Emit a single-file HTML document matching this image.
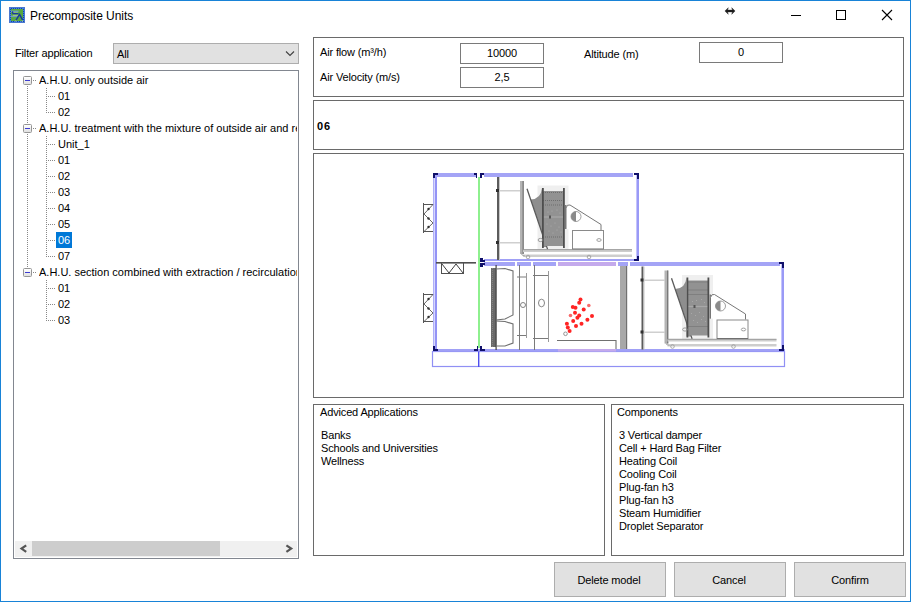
<!DOCTYPE html>
<html><head><meta charset="utf-8">
<style>
*{margin:0;padding:0;box-sizing:border-box}
html,body{width:911px;height:602px;overflow:hidden;background:#fff}
body{position:relative;font-family:"Liberation Sans",sans-serif;font-size:11px;color:#000}
.a{position:absolute}
.t{position:absolute;white-space:nowrap;line-height:13px;letter-spacing:-0.15px}
.win{left:0;top:0;width:911px;height:602px;border:1px solid #1883d7}
.grp{position:absolute;border:1px solid #6a6a6a}
.tb{position:absolute;border:1px solid #7a7a7a;background:#fff}
.btn{position:absolute;border:1px solid #adadad;background:#e1e1e1;width:112px;height:35px}
.dv{position:absolute;width:1px;background-image:linear-gradient(#808080 50%,transparent 50%);background-size:1px 2px}
.dh{position:absolute;height:1px;background-image:linear-gradient(90deg,#808080 50%,transparent 50%);background-size:2px 1px}
.exp{position:absolute;width:9px;height:9px;border:1px solid #959595;border-radius:1.5px;background:linear-gradient(#fff,#e0e0e0)}
.exp i{position:absolute;left:1px;top:3px;width:5px;height:1px;background:#3c3cd0}
</style></head><body>
<div class="a win"></div>
<!-- title bar -->
<svg class="a" style="left:9px;top:7px" width="16" height="16" viewBox="0 0 16 16">
<rect x="0" y="0" width="16" height="16" fill="#4a78d0"/>
<rect x="1" y="1" width="14" height="14" fill="#1a3fa8"/>
<rect x="2" y="2" width="12" height="12" fill="#58a840"/>
<path d="M1 1.5H15M1 14.5H15M1.5 1V15M14.5 1V15" stroke="#3a86e8" stroke-width="1" stroke-dasharray="1 1"/>
<rect x="2" y="3.6" width="7.5" height="1.6" fill="#6f9cc0"/>
<rect x="4" y="5.6" width="5" height="1" fill="#b8d890"/>
<rect x="1.5" y="8.5" width="7" height="1.6" fill="#6f9cc0"/>
<rect x="4" y="7.8" width="5" height="0.8" fill="#b8d890"/>
<path d="M4 4.5Q3 5.5 4 6.7H9.5" fill="none" stroke="#1838a0" stroke-width="1.3"/>
<path d="M7 13.2L10.6 7.5L13.6 13.2" fill="none" stroke="#1838a0" stroke-width="1.4"/>
<path d="M6 14L7.5 14M12.5 14L14 14" stroke="#c8e0a0" stroke-width="0.8"/>
</svg>
<div class="t" style="left:30px;top:9px;font-size:12px;line-height:15px;letter-spacing:-0.05px">Precomposite Units</div>
<svg class="a" style="left:724px;top:7px" width="13" height="8" viewBox="0 0 13 8">
<path d="M0.9 4L4.3 0.7L3.6 3.1H8.4L7.7 0.7L11.1 4L7.7 7.3L8.4 4.9H3.6L4.3 7.3Z" fill="#1e1e1e" stroke="#1e1e1e" stroke-width="0.4" stroke-linejoin="round"/>
</svg>
<div class="a" style="left:791px;top:15px;width:10px;height:1px;background:#000"></div>
<div class="a" style="left:836px;top:10px;width:10px;height:10px;border:1px solid #000"></div>
<svg class="a" style="left:881px;top:9px" width="12" height="12" viewBox="0 0 12 12">
<path d="M1 1L11 11M11 1L1 11" stroke="#000" stroke-width="1.1"/>
</svg>

<!-- filter -->
<div class="t" style="left:15px;top:47px">Filter application</div>
<div class="a" style="left:113px;top:43px;width:186px;height:21px;border:1px solid #adadad;background:#e1e1e1"></div>
<div class="t" style="left:117px;top:48px">All</div>
<svg class="a" style="left:285px;top:50px" width="10" height="7" viewBox="0 0 10 7">
<path d="M1 1.5L5 5.5L9 1.5" stroke="#404040" stroke-width="1.1" fill="none"/>
</svg>

<!-- tree -->
<div class="a" style="left:13px;top:70px;width:286px;height:489px;border:1px solid #828790;background:#fff;overflow:hidden">
</div>
<div class="a" style="left:15px;top:541px;width:282px;height:16px;background:#f0f0f0"></div>
<div class="a" style="left:32px;top:541px;width:188px;height:15px;background:#cdcdcd"></div>
<svg class="a" style="left:14px;top:541px" width="284" height="17" viewBox="0 0 284 17">
<path d="M12.2 4.3L7.5 7.6L12.2 10.9" stroke="#555" stroke-width="2.2" fill="none"/>
<path d="M272.4 4.3L277.2 7.6L272.4 10.9" stroke="#555" stroke-width="2.2" fill="none"/>
</svg>
<!--TREE--><svg class="a" style="left:0;top:0" width="120" height="360"><rect x="33" y="80" width="1" height="1" fill="#888888"/><rect x="35" y="80" width="1" height="1" fill="#888888"/><rect x="48" y="96" width="1" height="1" fill="#888888"/><rect x="50" y="96" width="1" height="1" fill="#888888"/><rect x="52" y="96" width="1" height="1" fill="#888888"/><rect x="54" y="96" width="1" height="1" fill="#888888"/><rect x="48" y="112" width="1" height="1" fill="#888888"/><rect x="50" y="112" width="1" height="1" fill="#888888"/><rect x="52" y="112" width="1" height="1" fill="#888888"/><rect x="54" y="112" width="1" height="1" fill="#888888"/><rect x="33" y="128" width="1" height="1" fill="#888888"/><rect x="35" y="128" width="1" height="1" fill="#888888"/><rect x="48" y="144" width="1" height="1" fill="#888888"/><rect x="50" y="144" width="1" height="1" fill="#888888"/><rect x="52" y="144" width="1" height="1" fill="#888888"/><rect x="54" y="144" width="1" height="1" fill="#888888"/><rect x="48" y="160" width="1" height="1" fill="#888888"/><rect x="50" y="160" width="1" height="1" fill="#888888"/><rect x="52" y="160" width="1" height="1" fill="#888888"/><rect x="54" y="160" width="1" height="1" fill="#888888"/><rect x="48" y="176" width="1" height="1" fill="#888888"/><rect x="50" y="176" width="1" height="1" fill="#888888"/><rect x="52" y="176" width="1" height="1" fill="#888888"/><rect x="54" y="176" width="1" height="1" fill="#888888"/><rect x="48" y="192" width="1" height="1" fill="#888888"/><rect x="50" y="192" width="1" height="1" fill="#888888"/><rect x="52" y="192" width="1" height="1" fill="#888888"/><rect x="54" y="192" width="1" height="1" fill="#888888"/><rect x="48" y="208" width="1" height="1" fill="#888888"/><rect x="50" y="208" width="1" height="1" fill="#888888"/><rect x="52" y="208" width="1" height="1" fill="#888888"/><rect x="54" y="208" width="1" height="1" fill="#888888"/><rect x="48" y="224" width="1" height="1" fill="#888888"/><rect x="50" y="224" width="1" height="1" fill="#888888"/><rect x="52" y="224" width="1" height="1" fill="#888888"/><rect x="54" y="224" width="1" height="1" fill="#888888"/><rect x="48" y="240" width="1" height="1" fill="#888888"/><rect x="50" y="240" width="1" height="1" fill="#888888"/><rect x="52" y="240" width="1" height="1" fill="#888888"/><rect x="54" y="240" width="1" height="1" fill="#888888"/><rect x="48" y="256" width="1" height="1" fill="#888888"/><rect x="50" y="256" width="1" height="1" fill="#888888"/><rect x="52" y="256" width="1" height="1" fill="#888888"/><rect x="54" y="256" width="1" height="1" fill="#888888"/><rect x="33" y="272" width="1" height="1" fill="#888888"/><rect x="35" y="272" width="1" height="1" fill="#888888"/><rect x="48" y="288" width="1" height="1" fill="#888888"/><rect x="50" y="288" width="1" height="1" fill="#888888"/><rect x="52" y="288" width="1" height="1" fill="#888888"/><rect x="54" y="288" width="1" height="1" fill="#888888"/><rect x="48" y="304" width="1" height="1" fill="#888888"/><rect x="50" y="304" width="1" height="1" fill="#888888"/><rect x="52" y="304" width="1" height="1" fill="#888888"/><rect x="54" y="304" width="1" height="1" fill="#888888"/><rect x="48" y="320" width="1" height="1" fill="#888888"/><rect x="50" y="320" width="1" height="1" fill="#888888"/><rect x="52" y="320" width="1" height="1" fill="#888888"/><rect x="54" y="320" width="1" height="1" fill="#888888"/><rect x="27" y="86" width="1" height="1" fill="#888888"/><rect x="27" y="88" width="1" height="1" fill="#888888"/><rect x="27" y="90" width="1" height="1" fill="#888888"/><rect x="27" y="92" width="1" height="1" fill="#888888"/><rect x="27" y="94" width="1" height="1" fill="#888888"/><rect x="27" y="96" width="1" height="1" fill="#888888"/><rect x="27" y="98" width="1" height="1" fill="#888888"/><rect x="27" y="100" width="1" height="1" fill="#888888"/><rect x="27" y="102" width="1" height="1" fill="#888888"/><rect x="27" y="104" width="1" height="1" fill="#888888"/><rect x="27" y="106" width="1" height="1" fill="#888888"/><rect x="27" y="108" width="1" height="1" fill="#888888"/><rect x="27" y="110" width="1" height="1" fill="#888888"/><rect x="27" y="112" width="1" height="1" fill="#888888"/><rect x="27" y="114" width="1" height="1" fill="#888888"/><rect x="27" y="116" width="1" height="1" fill="#888888"/><rect x="27" y="118" width="1" height="1" fill="#888888"/><rect x="27" y="120" width="1" height="1" fill="#888888"/><rect x="27" y="122" width="1" height="1" fill="#888888"/><rect x="27" y="134" width="1" height="1" fill="#888888"/><rect x="27" y="136" width="1" height="1" fill="#888888"/><rect x="27" y="138" width="1" height="1" fill="#888888"/><rect x="27" y="140" width="1" height="1" fill="#888888"/><rect x="27" y="142" width="1" height="1" fill="#888888"/><rect x="27" y="144" width="1" height="1" fill="#888888"/><rect x="27" y="146" width="1" height="1" fill="#888888"/><rect x="27" y="148" width="1" height="1" fill="#888888"/><rect x="27" y="150" width="1" height="1" fill="#888888"/><rect x="27" y="152" width="1" height="1" fill="#888888"/><rect x="27" y="154" width="1" height="1" fill="#888888"/><rect x="27" y="156" width="1" height="1" fill="#888888"/><rect x="27" y="158" width="1" height="1" fill="#888888"/><rect x="27" y="160" width="1" height="1" fill="#888888"/><rect x="27" y="162" width="1" height="1" fill="#888888"/><rect x="27" y="164" width="1" height="1" fill="#888888"/><rect x="27" y="166" width="1" height="1" fill="#888888"/><rect x="27" y="168" width="1" height="1" fill="#888888"/><rect x="27" y="170" width="1" height="1" fill="#888888"/><rect x="27" y="172" width="1" height="1" fill="#888888"/><rect x="27" y="174" width="1" height="1" fill="#888888"/><rect x="27" y="176" width="1" height="1" fill="#888888"/><rect x="27" y="178" width="1" height="1" fill="#888888"/><rect x="27" y="180" width="1" height="1" fill="#888888"/><rect x="27" y="182" width="1" height="1" fill="#888888"/><rect x="27" y="184" width="1" height="1" fill="#888888"/><rect x="27" y="186" width="1" height="1" fill="#888888"/><rect x="27" y="188" width="1" height="1" fill="#888888"/><rect x="27" y="190" width="1" height="1" fill="#888888"/><rect x="27" y="192" width="1" height="1" fill="#888888"/><rect x="27" y="194" width="1" height="1" fill="#888888"/><rect x="27" y="196" width="1" height="1" fill="#888888"/><rect x="27" y="198" width="1" height="1" fill="#888888"/><rect x="27" y="200" width="1" height="1" fill="#888888"/><rect x="27" y="202" width="1" height="1" fill="#888888"/><rect x="27" y="204" width="1" height="1" fill="#888888"/><rect x="27" y="206" width="1" height="1" fill="#888888"/><rect x="27" y="208" width="1" height="1" fill="#888888"/><rect x="27" y="210" width="1" height="1" fill="#888888"/><rect x="27" y="212" width="1" height="1" fill="#888888"/><rect x="27" y="214" width="1" height="1" fill="#888888"/><rect x="27" y="216" width="1" height="1" fill="#888888"/><rect x="27" y="218" width="1" height="1" fill="#888888"/><rect x="27" y="220" width="1" height="1" fill="#888888"/><rect x="27" y="222" width="1" height="1" fill="#888888"/><rect x="27" y="224" width="1" height="1" fill="#888888"/><rect x="27" y="226" width="1" height="1" fill="#888888"/><rect x="27" y="228" width="1" height="1" fill="#888888"/><rect x="27" y="230" width="1" height="1" fill="#888888"/><rect x="27" y="232" width="1" height="1" fill="#888888"/><rect x="27" y="234" width="1" height="1" fill="#888888"/><rect x="27" y="236" width="1" height="1" fill="#888888"/><rect x="27" y="238" width="1" height="1" fill="#888888"/><rect x="27" y="240" width="1" height="1" fill="#888888"/><rect x="27" y="242" width="1" height="1" fill="#888888"/><rect x="27" y="244" width="1" height="1" fill="#888888"/><rect x="27" y="246" width="1" height="1" fill="#888888"/><rect x="27" y="248" width="1" height="1" fill="#888888"/><rect x="27" y="250" width="1" height="1" fill="#888888"/><rect x="27" y="252" width="1" height="1" fill="#888888"/><rect x="27" y="254" width="1" height="1" fill="#888888"/><rect x="27" y="256" width="1" height="1" fill="#888888"/><rect x="27" y="258" width="1" height="1" fill="#888888"/><rect x="27" y="260" width="1" height="1" fill="#888888"/><rect x="27" y="262" width="1" height="1" fill="#888888"/><rect x="27" y="264" width="1" height="1" fill="#888888"/><rect x="27" y="266" width="1" height="1" fill="#888888"/><rect x="46" y="88" width="1" height="1" fill="#888888"/><rect x="46" y="90" width="1" height="1" fill="#888888"/><rect x="46" y="92" width="1" height="1" fill="#888888"/><rect x="46" y="94" width="1" height="1" fill="#888888"/><rect x="46" y="96" width="1" height="1" fill="#888888"/><rect x="46" y="98" width="1" height="1" fill="#888888"/><rect x="46" y="100" width="1" height="1" fill="#888888"/><rect x="46" y="102" width="1" height="1" fill="#888888"/><rect x="46" y="104" width="1" height="1" fill="#888888"/><rect x="46" y="106" width="1" height="1" fill="#888888"/><rect x="46" y="108" width="1" height="1" fill="#888888"/><rect x="46" y="110" width="1" height="1" fill="#888888"/><rect x="46" y="112" width="1" height="1" fill="#888888"/><rect x="46" y="136" width="1" height="1" fill="#888888"/><rect x="46" y="138" width="1" height="1" fill="#888888"/><rect x="46" y="140" width="1" height="1" fill="#888888"/><rect x="46" y="142" width="1" height="1" fill="#888888"/><rect x="46" y="144" width="1" height="1" fill="#888888"/><rect x="46" y="146" width="1" height="1" fill="#888888"/><rect x="46" y="148" width="1" height="1" fill="#888888"/><rect x="46" y="150" width="1" height="1" fill="#888888"/><rect x="46" y="152" width="1" height="1" fill="#888888"/><rect x="46" y="154" width="1" height="1" fill="#888888"/><rect x="46" y="156" width="1" height="1" fill="#888888"/><rect x="46" y="158" width="1" height="1" fill="#888888"/><rect x="46" y="160" width="1" height="1" fill="#888888"/><rect x="46" y="162" width="1" height="1" fill="#888888"/><rect x="46" y="164" width="1" height="1" fill="#888888"/><rect x="46" y="166" width="1" height="1" fill="#888888"/><rect x="46" y="168" width="1" height="1" fill="#888888"/><rect x="46" y="170" width="1" height="1" fill="#888888"/><rect x="46" y="172" width="1" height="1" fill="#888888"/><rect x="46" y="174" width="1" height="1" fill="#888888"/><rect x="46" y="176" width="1" height="1" fill="#888888"/><rect x="46" y="178" width="1" height="1" fill="#888888"/><rect x="46" y="180" width="1" height="1" fill="#888888"/><rect x="46" y="182" width="1" height="1" fill="#888888"/><rect x="46" y="184" width="1" height="1" fill="#888888"/><rect x="46" y="186" width="1" height="1" fill="#888888"/><rect x="46" y="188" width="1" height="1" fill="#888888"/><rect x="46" y="190" width="1" height="1" fill="#888888"/><rect x="46" y="192" width="1" height="1" fill="#888888"/><rect x="46" y="194" width="1" height="1" fill="#888888"/><rect x="46" y="196" width="1" height="1" fill="#888888"/><rect x="46" y="198" width="1" height="1" fill="#888888"/><rect x="46" y="200" width="1" height="1" fill="#888888"/><rect x="46" y="202" width="1" height="1" fill="#888888"/><rect x="46" y="204" width="1" height="1" fill="#888888"/><rect x="46" y="206" width="1" height="1" fill="#888888"/><rect x="46" y="208" width="1" height="1" fill="#888888"/><rect x="46" y="210" width="1" height="1" fill="#888888"/><rect x="46" y="212" width="1" height="1" fill="#888888"/><rect x="46" y="214" width="1" height="1" fill="#888888"/><rect x="46" y="216" width="1" height="1" fill="#888888"/><rect x="46" y="218" width="1" height="1" fill="#888888"/><rect x="46" y="220" width="1" height="1" fill="#888888"/><rect x="46" y="222" width="1" height="1" fill="#888888"/><rect x="46" y="224" width="1" height="1" fill="#888888"/><rect x="46" y="226" width="1" height="1" fill="#888888"/><rect x="46" y="228" width="1" height="1" fill="#888888"/><rect x="46" y="230" width="1" height="1" fill="#888888"/><rect x="46" y="232" width="1" height="1" fill="#888888"/><rect x="46" y="234" width="1" height="1" fill="#888888"/><rect x="46" y="236" width="1" height="1" fill="#888888"/><rect x="46" y="238" width="1" height="1" fill="#888888"/><rect x="46" y="240" width="1" height="1" fill="#888888"/><rect x="46" y="242" width="1" height="1" fill="#888888"/><rect x="46" y="244" width="1" height="1" fill="#888888"/><rect x="46" y="246" width="1" height="1" fill="#888888"/><rect x="46" y="248" width="1" height="1" fill="#888888"/><rect x="46" y="250" width="1" height="1" fill="#888888"/><rect x="46" y="252" width="1" height="1" fill="#888888"/><rect x="46" y="254" width="1" height="1" fill="#888888"/><rect x="46" y="256" width="1" height="1" fill="#888888"/><rect x="46" y="280" width="1" height="1" fill="#888888"/><rect x="46" y="282" width="1" height="1" fill="#888888"/><rect x="46" y="284" width="1" height="1" fill="#888888"/><rect x="46" y="286" width="1" height="1" fill="#888888"/><rect x="46" y="288" width="1" height="1" fill="#888888"/><rect x="46" y="290" width="1" height="1" fill="#888888"/><rect x="46" y="292" width="1" height="1" fill="#888888"/><rect x="46" y="294" width="1" height="1" fill="#888888"/><rect x="46" y="296" width="1" height="1" fill="#888888"/><rect x="46" y="298" width="1" height="1" fill="#888888"/><rect x="46" y="300" width="1" height="1" fill="#888888"/><rect x="46" y="302" width="1" height="1" fill="#888888"/><rect x="46" y="304" width="1" height="1" fill="#888888"/><rect x="46" y="306" width="1" height="1" fill="#888888"/><rect x="46" y="308" width="1" height="1" fill="#888888"/><rect x="46" y="310" width="1" height="1" fill="#888888"/><rect x="46" y="312" width="1" height="1" fill="#888888"/><rect x="46" y="314" width="1" height="1" fill="#888888"/><rect x="46" y="316" width="1" height="1" fill="#888888"/><rect x="46" y="318" width="1" height="1" fill="#888888"/><rect x="46" y="320" width="1" height="1" fill="#888888"/></svg>
<div class="exp" style="left:23px;top:76px"><i></i></div>
<div class="t" style="letter-spacing:0;left:39px;top:74px;width:258px;overflow:hidden">A.H.U. only outside air</div>
<div class="t" style="letter-spacing:0;left:58px;top:90px">01</div>
<div class="t" style="letter-spacing:0;left:58px;top:106px">02</div>
<div class="exp" style="left:23px;top:124px"><i></i></div>
<div class="t" style="letter-spacing:0;left:39px;top:122px;width:258px;overflow:hidden">A.H.U. treatment with the mixture of outside air and recirculation</div>
<div class="t" style="letter-spacing:0;left:58px;top:138px">Unit_1</div>
<div class="t" style="letter-spacing:0;left:58px;top:154px">01</div>
<div class="t" style="letter-spacing:0;left:58px;top:170px">02</div>
<div class="t" style="letter-spacing:0;left:58px;top:186px">03</div>
<div class="t" style="letter-spacing:0;left:58px;top:202px">04</div>
<div class="t" style="letter-spacing:0;left:58px;top:218px">05</div>
<div class="a" style="left:56px;top:232px;width:16px;height:16px;background:#0078d7"></div>
<div class="t" style="letter-spacing:0;left:58px;top:234px;color:#fff">06</div>
<div class="t" style="letter-spacing:0;left:58px;top:250px">07</div>
<div class="exp" style="left:23px;top:268px"><i></i></div>
<div class="t" style="letter-spacing:0;left:39px;top:266px;width:258px;overflow:hidden">A.H.U. section combined with extraction / recirculation</div>
<div class="t" style="letter-spacing:0;left:58px;top:282px">01</div>
<div class="t" style="letter-spacing:0;left:58px;top:298px">02</div>
<div class="t" style="letter-spacing:0;left:58px;top:314px">03</div><!--/TREE-->

<!-- right groups -->
<div class="grp" style="left:313px;top:37px;width:591px;height:60px"></div>
<div class="t" style="left:320px;top:46px">Air flow (m³/h)</div>
<div class="t" style="left:320px;top:71px">Air Velocity (m/s)</div>
<div class="tb" style="left:460px;top:43px;width:84px;height:21px"></div>
<div class="t" style="left:460px;top:47px;width:84px;text-align:center">10000</div>
<div class="tb" style="left:460px;top:67px;width:84px;height:21px"></div>
<div class="t" style="left:460px;top:71px;width:84px;text-align:center">2,5</div>
<div class="t" style="left:584px;top:48px">Altitude (m)</div>
<div class="tb" style="left:699px;top:42px;width:84px;height:21px"></div>
<div class="t" style="left:699px;top:46px;width:84px;text-align:center">0</div>

<div class="grp" style="left:313px;top:100px;width:591px;height:50px"></div>
<div class="t" style="left:317px;top:120px;font-weight:bold;letter-spacing:0.9px">06</div>

<div class="grp" style="left:313px;top:153px;width:591px;height:245px"></div>
<!--DIAG--><svg class="a" style="left:400px;top:160px" width="400" height="220" viewBox="400 160 400 220">

<!-- base frame -->
<rect x="432.5" y="351.5" width="352" height="15" fill="none" stroke="#9090f4" stroke-width="1.2"/>
<rect x="478" y="351" width="1.4" height="16" fill="#4f4ff0"/>

<!-- left column -->
<rect x="433" y="173" width="1" height="178" fill="#b0b0f8"/>
<rect x="434" y="173" width="1" height="178" fill="#d8d8fc"/>
<rect x="435" y="173" width="2" height="178" fill="#9494f6"/>
<rect x="433" y="173" width="44" height="4" fill="#a4a4f6"/>
<rect x="433" y="349" width="352" height="2.5" fill="#a0a0f6"/>
<rect x="478" y="177" width="2" height="171" fill="#8ef08e"/>
<!-- upper section bars -->
<rect x="484" y="173" width="149" height="4" fill="#a4a4f6"/>
<rect x="636" y="173" width="1" height="88" fill="#c4c4fc"/><rect x="637" y="173" width="2" height="88" fill="#9a9af6"/>
<rect x="484" y="259" width="150" height="2" fill="#a0a0f6"/>
<!-- lower section top bar segments -->
<rect x="484" y="262" width="31" height="4" fill="#a4a4f6"/>
<rect x="517" y="262" width="14" height="4" fill="#a4a4f6"/>
<rect x="533" y="262" width="23" height="4" fill="#a4a4f6"/>
<rect x="558" y="262" width="58" height="4" fill="#c4aaec"/>
<rect x="618" y="262" width="10" height="4" fill="#a4a4f6"/>
<rect x="630" y="262" width="150" height="4" fill="#a4a4f6"/>
<rect x="781" y="262" width="1" height="89" fill="#c4c4fc"/><rect x="782" y="262" width="2" height="89" fill="#9a9af6"/>
<!-- lower bottom bar tints -->
<rect x="558" y="349" width="58" height="2.5" fill="#c4aaec"/>

<!-- corner markers -->
<g fill="#10106a">
<path d="M433 173h5v2h-3v3h-2z"/>
<path d="M474 173h3v5h-1v-3h-2z"/><path d="M480 173h4v2h-2v3h-2z"/>
<path d="M634 173h5v6h-2v-4h-3z"/>
<path d="M637 256h2v5h-5v-2h3z"/>
<path d="M480 258h3v2h2v2h-5z"/><path d="M480 263h5v2h-2v2h-3z"/>
<path d="M779 262h5v6h-2v-4h-3z"/>
<path d="M782 345h2v6h-5v-2h3z"/>
<path d="M433 346h2v3h3v2h-5z"/>
<path d="M474 349h3v-3h1v5h-4z"/><path d="M480 346h2v3h3v2h-5z"/>
</g>

<!-- left dampers -->
<g>
<path d="M423.5 203V233M423 204.5H433M423 231.5H433" stroke="#555" stroke-width="1" fill="none"/>
<path d="M433 204.5L424 214L433 223L424 231.5" stroke="#555" stroke-width="0.9" fill="none"/>
<circle cx="428.5" cy="209" r="1.2" fill="#303030"/><circle cx="428.5" cy="218.5" r="1.2" fill="#303030"/><circle cx="428.5" cy="227" r="1.2" fill="#303030"/>
</g>
<g transform="translate(0 90)">
<path d="M423.5 203V233M423 204.5H433M423 231.5H433" stroke="#555" stroke-width="1" fill="none"/>
<path d="M433 204.5L424 214L433 223L424 231.5" stroke="#555" stroke-width="0.9" fill="none"/>
<circle cx="428.5" cy="209" r="1.2" fill="#303030"/><circle cx="428.5" cy="218.5" r="1.2" fill="#303030"/><circle cx="428.5" cy="227" r="1.2" fill="#303030"/>
</g>
<!-- middle horizontal damper -->
<rect x="436" y="262" width="40" height="1.6" fill="#505050"/>
<path d="M441.5 263V274M463.5 263V274M441 273.5H464" stroke="#505050" stroke-width="1" fill="none"/>
<path d="M442 264L449 273L456 264L463 273" stroke="#404040" stroke-width="1" fill="none"/>

<!-- upper fan -->
<g>
<!-- inlet cone lines -->
<rect x="497" y="177" width="2" height="83" fill="#5c5c5c"/>
<rect x="499" y="177" width="1" height="83" fill="#c8c8c8"/>
<rect x="499" y="190" width="21" height="1.5" fill="#cfcfcf"/>
<rect x="499" y="242" width="21" height="1.5" fill="#cfcfcf"/>
<rect x="496" y="189" width="3" height="3" fill="#303030"/>
<rect x="496" y="241" width="3" height="3" fill="#303030"/>
<!-- frame bar -->
<rect x="520" y="181" width="4" height="73" fill="#b4b4b4"/>
<rect x="522.5" y="181" width="1.2" height="73" fill="#7a7a7a"/>
<!-- housing shaded -->
<rect x="537.5" y="185.5" width="31" height="64" fill="#efefef"/>
<path d="M530.7 199.5 Q541 199 542 188 L542 247 L547 247 Z" fill="#8e8e8e"/>
<path d="M527 188.7 L547.6 249.4" stroke="#5a5a5a" stroke-width="1.3"/>
<!-- impeller -->
<rect x="543" y="191" width="21" height="55" fill="#929292"/>
<g stroke="#6a6a6a" stroke-width="0.9" stroke-dasharray="1 1">
<path d="M543 192.5H564M543 200.5H564M543 205H564M543 237H564"/>
</g>
<g fill="#b0b0b0">
<circle cx="548" cy="212" r="0.5"/><circle cx="552" cy="211" r="0.5"/><circle cx="557" cy="210" r="0.5"/><circle cx="560" cy="213" r="0.5"/>
<circle cx="547" cy="224" r="0.5"/><circle cx="551" cy="226" r="0.5"/><circle cx="555" cy="223" r="0.5"/><circle cx="559" cy="227" r="0.5"/>
<circle cx="549" cy="231" r="0.5"/><circle cx="553" cy="233" r="0.5"/><circle cx="557" cy="230" r="0.5"/><circle cx="561" cy="232" r="0.5"/>
</g>
<path d="M543 217H564" stroke="#a8a8a8" stroke-width="1.2"/>
<rect x="549" y="215.5" width="2" height="3" fill="#555"/>
<rect x="542" y="188" width="1.8" height="60" fill="#4e4e4e"/>
<rect x="563" y="188" width="1.8" height="60" fill="#4e4e4e"/>
<rect x="565" y="205" width="1.5" height="24" fill="#7a7a7a"/>
<!-- motor plate -->
<path d="M566 229 L566 208 Q567 204 570 205 L601 224.5 L601 230" fill="#fff" stroke="#777" stroke-width="1"/>
<circle cx="576" cy="216.5" r="5" fill="#fff" stroke="#888" stroke-width="0.8"/>
<path d="M576 211.5 A5 5 0 0 0 576 221.5 Z" fill="#8a8a8a"/>
<!-- motor base -->
<rect x="572.5" y="230.5" width="31" height="19" fill="#fff" stroke="#8a8a8a" stroke-width="1"/>
<rect x="572.5" y="248.5" width="31" height="1.5" fill="#6a6a6a"/>
<ellipse cx="599" cy="240" rx="2.2" ry="1.4" fill="none" stroke="#888" stroke-width="0.8"/>
<ellipse cx="540.5" cy="240" rx="2.4" ry="1.6" fill="none" stroke="#888" stroke-width="0.8"/>
<!-- rails -->
<rect x="523" y="249.5" width="109" height="2.5" fill="#cdcdcd"/>
<rect x="523" y="249.3" width="109" height="0.8" fill="#8a8a8a"/>
<rect x="523" y="254.5" width="109" height="2.5" fill="#cdcdcd"/>
<circle cx="528" cy="257" r="1.8" fill="none" stroke="#999" stroke-width="0.8"/>
<circle cx="589" cy="257" r="1.8" fill="none" stroke="#999" stroke-width="0.8"/>
<path d="M521 252 Q521 256 525 256" fill="none" stroke="#aaa" stroke-width="1"/>
</g>
<!-- lower fan -->
<g transform="translate(144.5 89.5)">
<!-- inlet cone lines -->
<rect x="497" y="177" width="2" height="83" fill="#5c5c5c"/>
<rect x="499" y="177" width="1" height="83" fill="#c8c8c8"/>
<rect x="499" y="190" width="21" height="1.5" fill="#cfcfcf"/>
<rect x="499" y="242" width="21" height="1.5" fill="#cfcfcf"/>
<rect x="496" y="189" width="3" height="3" fill="#303030"/>
<rect x="496" y="241" width="3" height="3" fill="#303030"/>
<!-- frame bar -->
<rect x="520" y="181" width="4" height="73" fill="#b4b4b4"/>
<rect x="522.5" y="181" width="1.2" height="73" fill="#7a7a7a"/>
<!-- housing shaded -->
<rect x="537.5" y="185.5" width="31" height="64" fill="#efefef"/>
<path d="M530.7 199.5 Q541 199 542 188 L542 247 L547 247 Z" fill="#8e8e8e"/>
<path d="M527 188.7 L547.6 249.4" stroke="#5a5a5a" stroke-width="1.3"/>
<!-- impeller -->
<rect x="543" y="191" width="21" height="55" fill="#929292"/>
<g stroke="#6a6a6a" stroke-width="0.9" stroke-dasharray="1 1">
<path d="M543 192.5H564M543 200.5H564M543 205H564M543 237H564"/>
</g>
<g fill="#b0b0b0">
<circle cx="548" cy="212" r="0.5"/><circle cx="552" cy="211" r="0.5"/><circle cx="557" cy="210" r="0.5"/><circle cx="560" cy="213" r="0.5"/>
<circle cx="547" cy="224" r="0.5"/><circle cx="551" cy="226" r="0.5"/><circle cx="555" cy="223" r="0.5"/><circle cx="559" cy="227" r="0.5"/>
<circle cx="549" cy="231" r="0.5"/><circle cx="553" cy="233" r="0.5"/><circle cx="557" cy="230" r="0.5"/><circle cx="561" cy="232" r="0.5"/>
</g>
<path d="M543 217H564" stroke="#a8a8a8" stroke-width="1.2"/>
<rect x="549" y="215.5" width="2" height="3" fill="#555"/>
<rect x="542" y="188" width="1.8" height="60" fill="#4e4e4e"/>
<rect x="563" y="188" width="1.8" height="60" fill="#4e4e4e"/>
<rect x="565" y="205" width="1.5" height="24" fill="#7a7a7a"/>
<!-- motor plate -->
<path d="M566 229 L566 208 Q567 204 570 205 L601 224.5 L601 230" fill="#fff" stroke="#777" stroke-width="1"/>
<circle cx="576" cy="216.5" r="5" fill="#fff" stroke="#888" stroke-width="0.8"/>
<path d="M576 211.5 A5 5 0 0 0 576 221.5 Z" fill="#8a8a8a"/>
<!-- motor base -->
<rect x="572.5" y="230.5" width="31" height="19" fill="#fff" stroke="#8a8a8a" stroke-width="1"/>
<rect x="572.5" y="248.5" width="31" height="1.5" fill="#6a6a6a"/>
<ellipse cx="599" cy="240" rx="2.2" ry="1.4" fill="none" stroke="#888" stroke-width="0.8"/>
<ellipse cx="540.5" cy="240" rx="2.4" ry="1.6" fill="none" stroke="#888" stroke-width="0.8"/>
<!-- rails -->
<rect x="523" y="249.5" width="109" height="2.5" fill="#cdcdcd"/>
<rect x="523" y="249.3" width="109" height="0.8" fill="#8a8a8a"/>
<rect x="523" y="254.5" width="109" height="2.5" fill="#cdcdcd"/>
<circle cx="528" cy="257" r="1.8" fill="none" stroke="#999" stroke-width="0.8"/>
<circle cx="589" cy="257" r="1.8" fill="none" stroke="#999" stroke-width="0.8"/>
<path d="M521 252 Q521 256 525 256" fill="none" stroke="#aaa" stroke-width="1"/>
</g>

<!-- bag filter -->
<rect x="491" y="268" width="5" height="79" fill="#6a6a6a"/><path d="M492.5 268V347" stroke="#8a8a8a" stroke-width="0.8" stroke-dasharray="1 1"/>
<rect x="495.5" y="265" width="1.2" height="85" fill="#404040"/>
<path d="M496 269 L505 268.5 L513 271 L513 315 L505 319 L496 320" fill="none" stroke="#707070" stroke-width="1.1"/>
<path d="M496 321 L505 321.5 L513 324 L513 343 L505 346 L496 346" fill="none" stroke="#707070" stroke-width="1.1"/>
<!-- heating coil -->
<path d="M519.5 265V350M517 277H527M517 335.5H527" stroke="#7a7a7a" stroke-width="1" fill="none"/><path d="M526.5 273V338" stroke="#9a9a9a" stroke-width="1"/>
<circle cx="523" cy="305" r="2.5" fill="none" stroke="#777" stroke-width="0.9"/>
<!-- cooling coil -->
<path d="M534.5 265V350M533 275.5H549M533 338.5H549" stroke="#7a7a7a" stroke-width="1" fill="none"/><path d="M548.5 271V342" stroke="#9a9a9a" stroke-width="1"/>
<ellipse cx="541.5" cy="303" rx="3" ry="3.8" fill="none" stroke="#777" stroke-width="0.9"/>
<!-- humidifier -->
<path d="M557 340.5H616V349" stroke="#707070" stroke-width="1.1" fill="none"/>
<circle cx="565.5" cy="333.8" r="1.8" fill="none" stroke="#888" stroke-width="0.9"/>
<g fill="#ff2424">
<circle cx="580.5" cy="299.6" r="2"/><circle cx="579.2" cy="302.8" r="2"/><circle cx="572.8" cy="306.9" r="2"/>
<circle cx="575.5" cy="307.8" r="2"/><circle cx="588.8" cy="305.5" r="1.8" fill="#f86a6a"/><circle cx="583.7" cy="309.6" r="2"/>
<circle cx="575" cy="312.8" r="2"/><circle cx="579.2" cy="315.5" r="2"/><circle cx="577.4" cy="317.8" r="2"/>
<circle cx="570.5" cy="315.5" r="1.8" fill="#f86a6a"/><circle cx="592" cy="316" r="2"/><circle cx="587.4" cy="319.7" r="2"/>
<circle cx="573.2" cy="321" r="2"/><circle cx="581.5" cy="323.8" r="2"/><circle cx="576" cy="326" r="2"/>
<circle cx="566.9" cy="323.8" r="2"/><circle cx="567.8" cy="327.4" r="2"/><circle cx="569.6" cy="331" r="2"/>
</g>
<!-- droplet separator -->
<rect x="620" y="266" width="7" height="83" fill="#a8a8a8"/>
<rect x="626" y="266" width="1.2" height="83" fill="#707070"/>
</svg>
<!--/DIAG-->

<div class="grp" style="left:313px;top:404px;width:292px;height:152px"></div>
<div class="t" style="left:320px;top:406px">Adviced Applications</div>
<div class="t" style="left:321px;top:429px">Banks<br>Schools and Universities<br>Wellness</div>
<div class="grp" style="left:611px;top:404px;width:293px;height:152px"></div>
<div class="t" style="left:617px;top:406px">Components</div>
<div class="t" style="left:619px;top:429px">3 Vertical damper<br>Cell + Hard Bag Filter<br>Heating Coil<br>Cooling Coil<br>Plug-fan h3<br>Plug-fan h3<br>Steam Humidifier<br>Droplet Separator</div>

<div class="btn" style="left:554px;top:562px"></div>
<div class="t" style="left:553px;top:574px;width:112px;text-align:center">Delete model</div>
<div class="btn" style="left:674px;top:562px"></div>
<div class="t" style="left:673px;top:574px;width:112px;text-align:center">Cancel</div>
<div class="btn" style="left:794px;top:562px"></div>
<div class="t" style="left:794px;top:574px;width:112px;text-align:center">Confirm</div>
</body></html>
